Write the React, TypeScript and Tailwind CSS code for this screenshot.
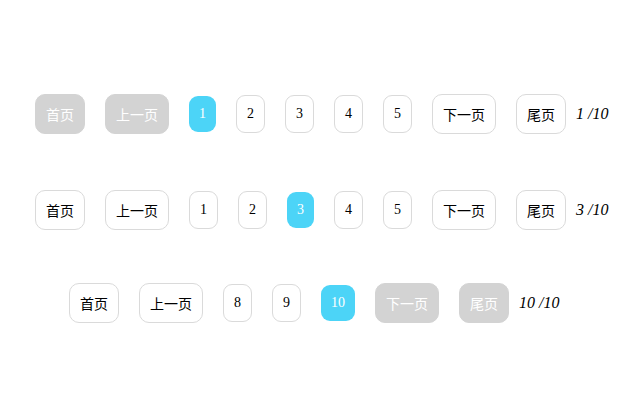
type Item = { label: string; kind: "text" | "num"; state: "normal" | "active" | "disabled" };

type Row = { pad: string; items: Item[]; total: string };

const rows: Row[] = [
  {
    pad: "pl-[35px]",
    total: "1 /10",
    items: [
      { label: "首页", kind: "text", state: "disabled" },
      { label: "上一页", kind: "text", state: "disabled" },
      { label: "1", kind: "num", state: "active" },
      { label: "2", kind: "num", state: "normal" },
      { label: "3", kind: "num", state: "normal" },
      { label: "4", kind: "num", state: "normal" },
      { label: "5", kind: "num", state: "normal" },
      { label: "下一页", kind: "text", state: "normal" },
      { label: "尾页", kind: "text", state: "normal" },
    ],
  },
  {
    pad: "pl-[35px] mt-[56px]",
    total: "3 /10",
    items: [
      { label: "首页", kind: "text", state: "normal" },
      { label: "上一页", kind: "text", state: "normal" },
      { label: "1", kind: "num", state: "normal" },
      { label: "2", kind: "num", state: "normal" },
      { label: "3", kind: "num", state: "active" },
      { label: "4", kind: "num", state: "normal" },
      { label: "5", kind: "num", state: "normal" },
      { label: "下一页", kind: "text", state: "normal" },
      { label: "尾页", kind: "text", state: "normal" },
    ],
  },
  {
    pad: "pl-[69px] mt-[53px]",
    total: "10 /10",
    items: [
      { label: "首页", kind: "text", state: "normal" },
      { label: "上一页", kind: "text", state: "normal" },
      { label: "8", kind: "num", state: "normal" },
      { label: "9", kind: "num", state: "normal" },
      { label: "10", kind: "num", state: "active" },
      { label: "下一页", kind: "text", state: "disabled" },
      { label: "尾页", kind: "text", state: "disabled" },
    ],
  },
];

function PageButton({ item }: { item: Item }) {
  const base =
    item.kind === "text"
      ? "h-10 px-[10px] text-[14px] font-['Noto_Sans_CJK_SC',sans-serif]"
      : "px-[10px] text-[14px] font-['Liberation_Serif',serif]";
  let look = "";
  if (item.state === "disabled") {
    look = "bg-[#d3d3d3] text-white border border-[#d3d3d3] rounded-[10px]";
  } else if (item.state === "active") {
    look = "h-9 bg-[#4cd4f7] text-white rounded-[9px]";
  } else {
    look =
      "bg-white text-black border border-[#dadada] " +
      (item.kind === "text" ? "rounded-[10px]" : "h-[38px] rounded-[9px]");
  }
  return (
    <span className={`flex items-center justify-center leading-none ${base} ${look}`}>
      {item.label}
    </span>
  );
}

export default function App() {
  return (
    <div className="min-h-[414px] w-[639px] bg-white pt-[94px]">
      {rows.map((row, i) => (
        <div key={i} className={`flex items-center gap-[10px] ${row.pad}`}>
          <div className="flex items-center gap-5">
            {row.items.map((item, j) => (
              <PageButton key={j} item={item} />
            ))}
          </div>
          <span className="text-[16px] italic text-black font-['Liberation_Serif',serif]">
            {row.total}
          </span>
        </div>
      ))}
    </div>
  );
}
